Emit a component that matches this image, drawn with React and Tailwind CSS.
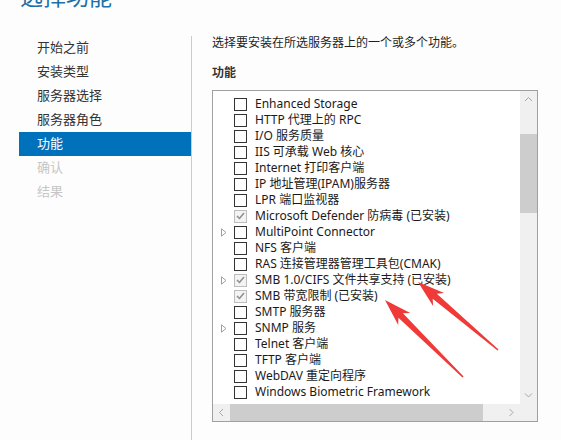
import React from 'react';

const NAV = [
  { label: '开始之前' },
  { label: '安装类型' },
  { label: '服务器选择' },
  { label: '服务器角色' },
  { label: '功能', active: true },
  { label: '确认', disabled: true },
  { label: '结果', disabled: true },
];

const FEATURES = [
  { name: 'Enhanced Storage' },
  { name: 'HTTP 代理上的 RPC' },
  { name: 'I/O 服务质量' },
  { name: 'IIS 可承载 Web 核心' },
  { name: 'Internet 打印客户端' },
  { name: 'IP 地址管理(IPAM)服务器' },
  { name: 'LPR 端口监视器' },
  { name: 'Microsoft Defender 防病毒 (已安装)', checked: true },
  { name: 'MultiPoint Connector', tree: true },
  { name: 'NFS 客户端' },
  { name: 'RAS 连接管理器管理工具包(CMAK)' },
  { name: 'SMB 1.0/CIFS 文件共享支持 (已安装)', tree: true, checked: true },
  { name: 'SMB 带宽限制 (已安装)', checked: true },
  { name: 'SMTP 服务器' },
  { name: 'SNMP 服务', tree: true },
  { name: 'Telnet 客户端' },
  { name: 'TFTP 客户端' },
  { name: 'WebDAV 重定向程序' },
  { name: 'Windows Biometric Framework' },
];

// red callout arrows drawn over the list, tip/tail in page pixels
const ARROWS = [
  { tip: [418, 282], tail: [498, 350] },
  { tip: [385, 300], tail: [463, 377] },
];

function arrowPoints({ tip, tail }) {
  const dx = tip[0] - tail[0];
  const dy = tip[1] - tail[1];
  const len = Math.hypot(dx, dy);
  const ux = dx / len;
  const uy = dy / len;
  const nx = -uy;
  const ny = ux;
  const at = (d, w) => [tip[0] - ux * d + nx * w, tip[1] - uy * d + ny * w];
  const pts = [
    tip,
    at(27, 8.5),
    at(22, 3.2),
    [tail[0] + nx * 0.8, tail[1] + ny * 0.8],
    [tail[0] - nx * 0.8, tail[1] - ny * 0.8],
    at(22, -3.2),
    at(27, -8.5),
  ];
  return pts.map((p) => p.map((v) => v.toFixed(1)).join(',')).join(' ');
}

function Chevron({ dir }) {
  const d = {
    up: 'M1 5 L4.5 1.5 L8 5',
    down: 'M1 1.5 L4.5 5 L8 1.5',
    left: 'M5 1 L1.5 4.5 L5 8',
    right: 'M1.5 1 L5 4.5 L1.5 8',
  }[dir];
  const vertical = dir === 'up' || dir === 'down';
  return (
    <svg width={vertical ? 9 : 7} height={vertical ? 7 : 9} viewBox={vertical ? '0 0 9 7' : '0 0 7 9'}>
      <path d={d} fill="none" stroke="#a6a6a6" strokeWidth="1" />
    </svg>
  );
}

function CheckBox({ checked }) {
  if (checked) {
    return (
      <span className="w-[13px] h-[13px] border border-[#bcbcbc] bg-[#f3f3f3] flex items-center justify-center">
        <svg width="9" height="8" viewBox="0 0 9 8">
          <path d="M1 4 L3.5 6.5 L8 1" fill="none" stroke="#8c8c8c" strokeWidth="1.5" />
        </svg>
      </span>
    );
  }
  return <span className="block w-[13px] h-[13px] border border-[#333333] bg-white" />;
}

function FeatureRow({ item }) {
  return (
    <div className="h-[16px] flex items-center pl-[8px] whitespace-nowrap">
      <span className="w-[7px] h-[9px] flex items-center">
        {item.tree && (
          <svg width="6" height="9" viewBox="0 0 6 9">
            <path d="M0.5 0.8 L5 4.5 L0.5 8.2 Z" fill="none" stroke="#a0a0a0" strokeWidth="1" />
          </svg>
        )}
      </span>
      <span className="ml-[6px]">
        <CheckBox checked={item.checked} />
      </span>
      <span className="ml-[8px] text-[12px] leading-[16px] text-[#1a1a1a]">{item.name}</span>
    </div>
  );
}

export default function App() {
  return (
    <div
      className="w-[561px] h-[440px] overflow-hidden bg-[#fdfdfd] relative"
      style={{ fontFamily: '"Noto Sans", "Noto Sans CJK SC", sans-serif' }}
    >
      <div className="h-[36px] pl-[20px] flex flex-col">
        <div className="text-[23px] leading-[23px] mt-[-15px] text-[#1d6fa9]">选择功能</div>
      </div>

      <div className="flex h-[404px]">
        <nav className="w-[192px] border-r border-[#cccccc] pl-[19px]">
          {NAV.map((n) => (
            <div
              key={n.label}
              className={`h-[24px] pl-[18px] flex items-center text-[13px] ${
                n.active ? 'bg-[#0072bc] text-white' : n.disabled ? 'text-[#c6c6c6]' : 'text-[#333333]'
              }`}
            >
              {n.label}
            </div>
          ))}
        </nav>

        <div className="pl-[20px]">
          <p className="text-[12px] leading-[14px] text-[#1e1e1e]">选择要安装在所选服务器上的一个或多个功能。</p>
          <p className="mt-[15px] text-[12px] leading-[15px] font-bold text-[#333333]">功能</p>

          <div className="mt-[10px] w-[326px] h-[332px] border border-[#a0a0a0] bg-white flex flex-col">
            <div className="flex flex-1 min-h-0">
              <div className="flex-1 pt-[5px] overflow-hidden">
                {FEATURES.map((f) => (
                  <FeatureRow key={f.name} item={f} />
                ))}
              </div>
              <div className="w-[17px] bg-[#f0f0f0] flex flex-col">
                <div className="h-[17px] flex items-center justify-center">
                  <Chevron dir="up" />
                </div>
                <div className="mt-[26px] h-[79px] bg-[#cdcdcd]" />
                <div className="flex-1" />
                <div className="h-[17px] flex items-center justify-center">
                  <Chevron dir="down" />
                </div>
              </div>
            </div>
            <div className="h-[17px] flex bg-[#f0f0f0]">
              <div className="w-[17px] flex items-center justify-center">
                <Chevron dir="left" />
              </div>
              <div className="w-[253px] bg-[#cdcdcd]" />
              <div className="flex-1" />
              <div className="w-[17px] flex items-center justify-center">
                <Chevron dir="right" />
              </div>
              <div className="w-[17px]" />
            </div>
          </div>
        </div>
      </div>

      <svg className="absolute inset-0 pointer-events-none" width="561" height="440">
        {ARROWS.map((a, i) => (
          <polygon key={i} points={arrowPoints(a)} fill="#ef3a37" />
        ))}
      </svg>
    </div>
  );
}
